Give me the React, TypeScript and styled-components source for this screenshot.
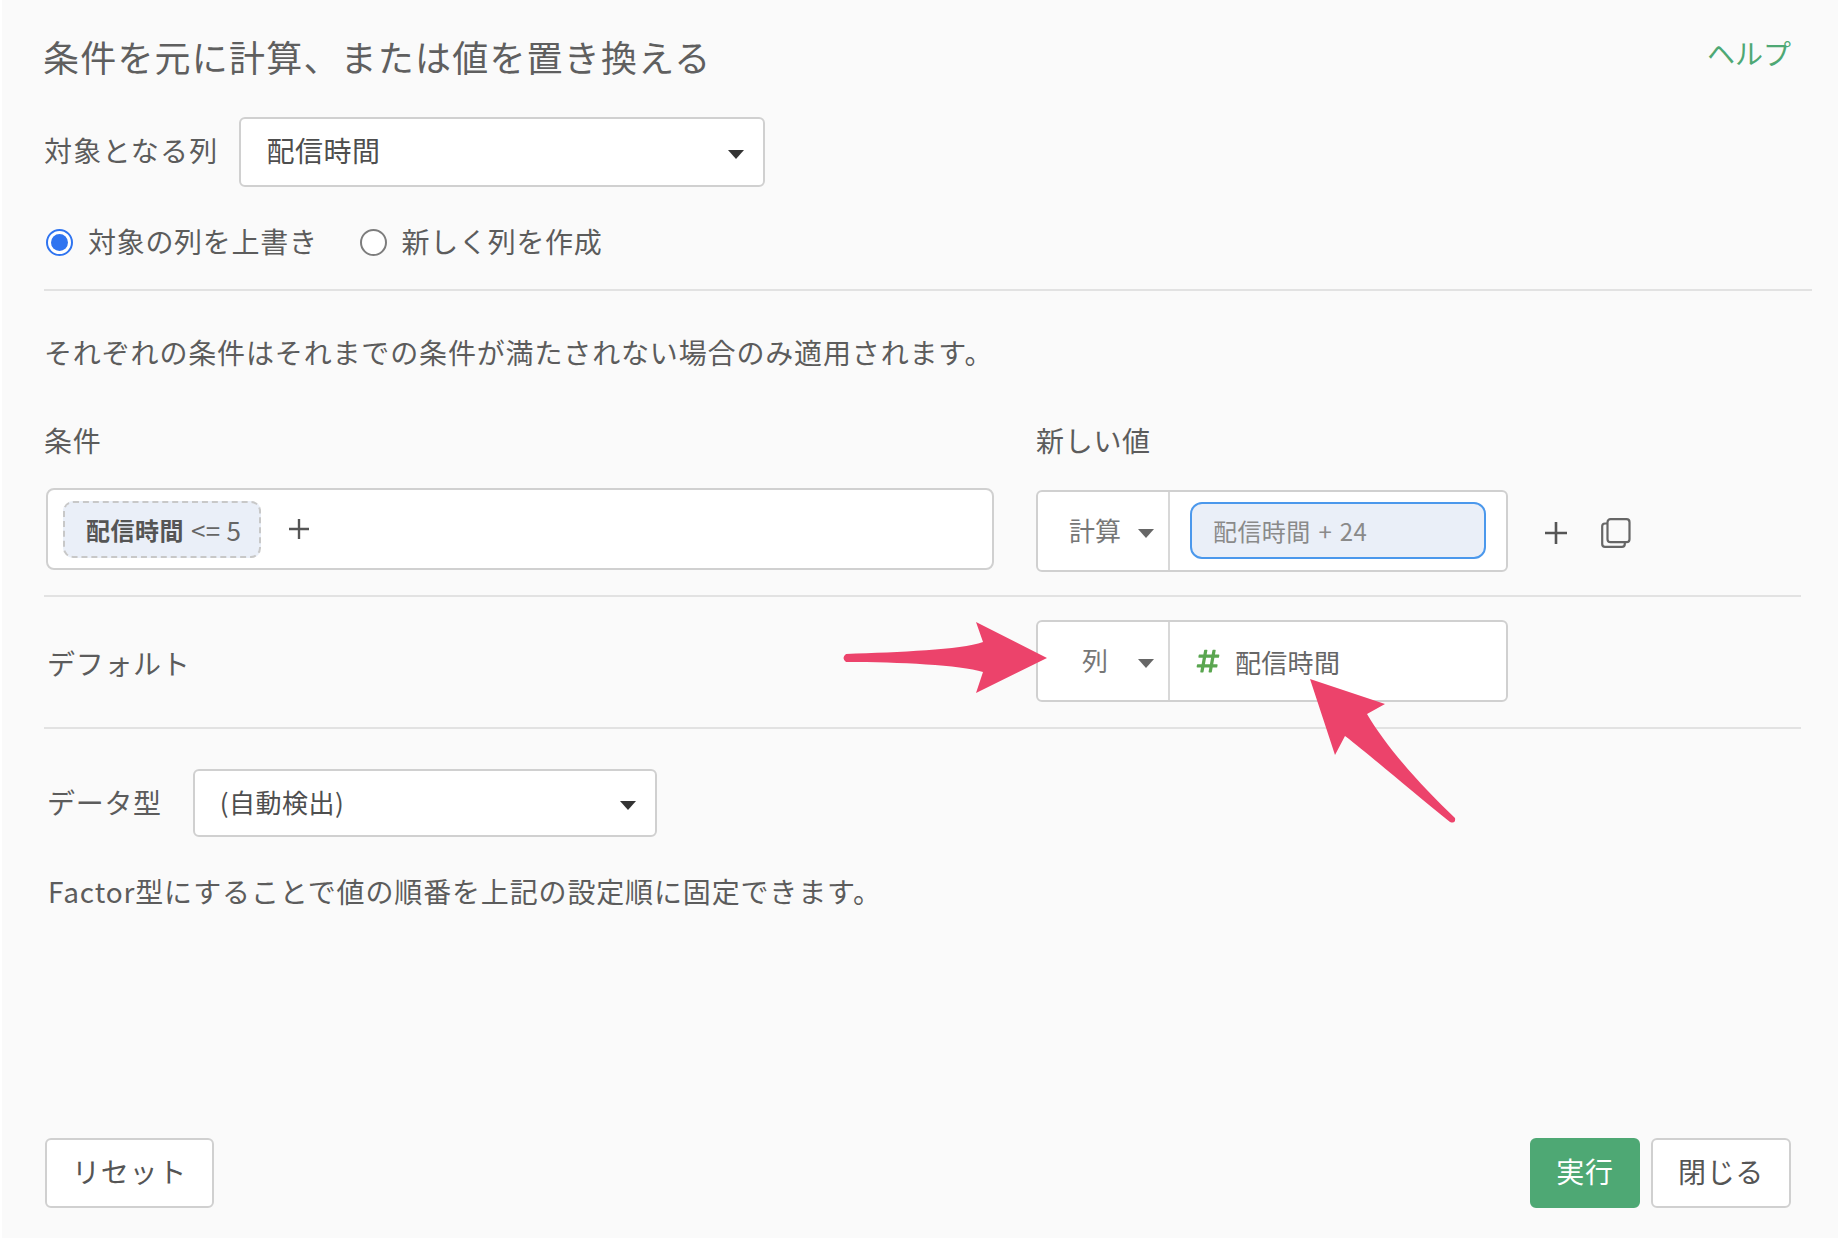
import React from 'react';
import styled, { createGlobalStyle } from 'styled-components';
import { FaHashtag } from 'react-icons/fa';

const GlobalStyle = createGlobalStyle`
  html, body {
    margin: 0;
    padding: 0;
    background: #fafafa;
  }
  * {
    box-sizing: border-box;
  }
`;

const Page = styled.div`
  position: relative;
  width: 1838px;
  height: 1238px;
  padding: 0 47px 30px 44px;
  display: flex;
  flex-direction: column;
  overflow: hidden;
  background: #fafafa;
  border-left: 2px solid #ffffff;
  color: #5c5c5c;
  font-family: "Noto Sans CJK JP", "Noto Sans", sans-serif;
  font-size: 28px;
  letter-spacing: 0.7px;
`;
const Header = styled.div`
  height: 117px;
  margin-left: -3px;
  display: flex;
  justify-content: space-between;
  align-items: flex-start;
`;
const Title = styled.h1`
  margin: 34px 0 0;
  font-size: 36px;
  font-weight: 400;
  line-height: 44px;
  letter-spacing: 1.2px;
  color: #5f5f5f;
`;
const HelpLink = styled.a`
  margin-top: 33px;
  font-size: 28px;
  line-height: 40px;
  letter-spacing: 0;
  color: #4ea874;
`;
const FieldRow = styled.div<{ $top?: number; $gap: number }>`
  margin-top: ${(p) => p.$top ?? 0}px;
  display: flex;
  align-items: center;
  gap: ${(p) => p.$gap}px;
`;
const FieldLabel = styled.label`
  margin: -4px 0 0 -2px;
  font-size: 28px;
  line-height: 40px;
  letter-spacing: 1.2px;
  white-space: nowrap;
`;
const Select = styled.div<{ $width: number; $height: number; $size: number }>`
  width: ${(p) => p.$width}px;
  height: ${(p) => p.$height}px;
  padding: 0 19px 0 25px;
  display: flex;
  align-items: center;
  justify-content: space-between;
  background: #ffffff;
  border: 2px solid #d0d0d0;
  border-radius: 6px;
  font-size: ${(p) => p.$size}px;
  letter-spacing: 0.5px;
  color: #4e4e4e;
`;
const SelectText = styled.span`
  margin-top: -4px;
`;
const Caret = styled.span<{ $color?: string }>`
  flex: none;
  width: 0;
  height: 0;
  margin-top: 4px;
  border-left: 8px solid transparent;
  border-right: 8px solid transparent;
  border-top: 9px solid ${(p) => p.$color ?? '#333333'};
`;
const RadioRow = styled.div`
  margin-top: 41px;
  display: flex;
  align-items: center;
  height: 28px;
`;
const RadioOption = styled.div`
  display: flex;
  align-items: center;
  gap: 15px;
  margin-right: 42px;
`;
const RadioLabel = styled.span`
  margin-top: -2px;
`;
const RadioMark = styled.span<{ $checked?: boolean }>`
  width: 27px;
  height: 27px;
  border-radius: 50%;
  background: #ffffff;
  border: 2px solid ${(p) => (p.$checked ? '#2f74f0' : '#7d7d7d')};
  display: flex;
  align-items: center;
  justify-content: center;
  &::after {
    content: '';
    display: ${(p) => (p.$checked ? 'block' : 'none')};
    width: 17px;
    height: 17px;
    border-radius: 50%;
    background: #2f74f0;
  }
`;
const Divider = styled.hr<{ $top: number; $width: number }>`
  margin: ${(p) => p.$top}px 0 0 -2px;
  width: ${(p) => p.$width}px;
  height: 2px;
  flex: none;
  border: 0;
  background: #e2e2e2;
`;
const Note = styled.p<{ $top: number; $indent?: number }>`
  margin: ${(p) => p.$top}px 0 0 ${(p) => p.$indent ?? 0}px;
  font-size: 28px;
  line-height: 40px;
  letter-spacing: 0.85px;
`;
const RuleGrid = styled.div<{ $top: number }>`
  margin-top: ${(p) => p.$top}px;
  display: grid;
  grid-template-columns: 948px 472px auto;
  column-gap: 42px;
  align-items: center;
`;
const ColumnLabel = styled.div<{ $inset?: number }>`
  margin-left: ${(p) => p.$inset ?? 0}px;
  font-size: 28px;
  line-height: 40px;
`;
const ConditionBox = styled.div`
  height: 82px;
  margin-bottom: 2px;
  padding-left: 15px;
  display: flex;
  align-items: center;
  gap: 28px;
  background: #ffffff;
  border: 2px solid #d0d0d0;
  border-radius: 8px;
`;
const ConditionChip = styled.div`
  width: 198px;
  height: 57px;
  padding-left: 21px;
  display: flex;
  align-items: center;
  gap: 7px;
  background: #eaeff8;
  border: 2px dashed #c8c8c8;
  border-radius: 10px;
  font-size: 26px;
  letter-spacing: 0.3px;
  color: #666666;
  white-space: nowrap;
`;
const ChipColumn = styled.b`
  font-size: 24px;
  font-weight: 700;
  letter-spacing: 0.5px;
  color: #555555;
`;
const ValueBox = styled.div<{ $top?: number }>`
  height: 82px;
  margin-top: ${(p) => p.$top ?? 0}px;
  display: flex;
  background: #ffffff;
  border: 2px solid #d0d0d0;
  border-radius: 6px;
`;
const ValueType = styled.div`
  width: 132px;
  flex: none;
  padding-left: 28px;
  display: flex;
  align-items: center;
  gap: 14px;
  border-right: 2px solid #d8d8d8;
  font-size: 26px;
  letter-spacing: 0;
  color: #777777;
`;
const ValueTypeText = styled.span`
  width: 58px;
  margin-top: -3px;
  text-align: center;
`;
const ValueField = styled.div`
  flex: 1;
  padding: 0 20px;
  display: flex;
  align-items: center;
  font-size: 26px;
  letter-spacing: 0.3px;
  color: #666666;
`;
const ValueInput = styled.div`
  width: 100%;
  height: 57px;
  margin-top: -2px;
  padding-left: 21px;
  display: flex;
  align-items: center;
  background: #eaeff8;
  border: 2px solid #4b98ec;
  border-radius: 12px;
  font-size: 24px;
  letter-spacing: 0.4px;
  word-spacing: 2px;
  color: #8a8a8a;
`;
const ColumnValue = styled.span`
  display: flex;
  align-items: center;
  gap: 14px;
  margin-left: 5px;
  color: #666666;
`;
const RowActions = styled.div`
  display: flex;
  align-items: center;
  gap: 34px;
  margin: 5px 0 0 -5px;
  color: #555555;
`;
const RowLabel = styled.div<{ $drop?: number }>`
  padding-left: 1px;
  margin-top: ${(p) => p.$drop ?? 0}px;
  font-size: 28px;
  line-height: 40px;
`;
const Footer = styled.div`
  margin-top: auto;
  margin-left: -1px;
  display: flex;
  align-items: stretch;
  gap: 11px;
`;
const Button = styled.button<{ $primary?: boolean; $width: number }>`
  width: ${(p) => p.$width}px;
  height: 70px;
  padding: 0 0 4px;
  background: ${(p) => (p.$primary ? '#4ea874' : '#ffffff')};
  border: 2px solid ${(p) => (p.$primary ? '#4ea874' : '#d0d0d0')};
  border-radius: 6px;
  color: ${(p) => (p.$primary ? '#ffffff' : '#555555')};
  font-family: inherit;
  font-size: 28px;
  letter-spacing: 0.7px;
`;
const FooterSpacer = styled.div`
  flex: 1;
`;
const ArrowLayer = styled.svg`
  position: absolute;
  left: -2px;
  top: 0;
  pointer-events: none;
`;

const PlusIcon = ({ size }: { size: number }) => (
  <svg width={size} height={size} viewBox="0 0 22 22" fill="none" stroke="#555555" strokeWidth="2.6">
    <path d="M11 0v22M0 11h22" />
  </svg>
);

const CopyIcon = () => (
  <svg width="30" height="30" viewBox="0 0 30 30" fill="none" stroke="#666666" strokeWidth="2.2">
    <rect x="6.5" y="1.2" width="22" height="23" rx="3" />
    <path d="M6.5 5.5H4A2.8 2.8 0 0 0 1.2 8.3V26A2.8 2.8 0 0 0 4 28.8H21A2.8 2.8 0 0 0 23.8 26V24.2" />
  </svg>
);

const App = () => (
  <Page>
    <GlobalStyle />
    <Header>
      <Title>条件を元に計算、または値を置き換える</Title>
      <HelpLink>ヘルプ</HelpLink>
    </Header>
    <FieldRow $gap={21}>
      <FieldLabel>対象となる列</FieldLabel>
      <Select $width={526} $height={70} $size={28}>
        <SelectText>配信時間</SelectText>
        <Caret />
      </Select>
    </FieldRow>
    <RadioRow>
      <RadioOption>
        <RadioMark $checked />
        <RadioLabel>対象の列を上書き</RadioLabel>
      </RadioOption>
      <RadioOption>
        <RadioMark />
        <RadioLabel>新しく列を作成</RadioLabel>
      </RadioOption>
    </RadioRow>
    <Divider $top={33} $width={1768} />
    <Note $top={41} $indent={-2}>それぞれの条件はそれまでの条件が満たされない場合のみ適用されます。</Note>
    <RuleGrid $top={48}>
      <ColumnLabel $inset={-2}>条件</ColumnLabel>
      <ColumnLabel>新しい値</ColumnLabel>
      <span />
    </RuleGrid>
    <RuleGrid $top={28}>
      <ConditionBox>
        <ConditionChip>
          <ChipColumn>配信時間</ChipColumn> {'<= 5'}
        </ConditionChip>
        <PlusIcon size={20} />
      </ConditionBox>
      <ValueBox $top={2}>
        <ValueType>
          <ValueTypeText>計算</ValueTypeText>
          <Caret $color="#666666" />
        </ValueType>
        <ValueField>
          <ValueInput>配信時間 + 24</ValueInput>
        </ValueField>
      </ValueBox>
      <RowActions>
        <PlusIcon size={22} />
        <CopyIcon />
      </RowActions>
    </RuleGrid>
    <Divider $top={23} $width={1757} />
    <RuleGrid $top={23}>
      <RowLabel $drop={4}>デフォルト</RowLabel>
      <ValueBox>
        <ValueType>
          <ValueTypeText>列</ValueTypeText>
          <Caret $color="#666666" />
        </ValueType>
        <ValueField>
          <ColumnValue>
            <FaHashtag size={26} color="#5aa650" />
            配信時間
          </ColumnValue>
        </ValueField>
      </ValueBox>
      <span />
    </RuleGrid>
    <Divider $top={25} $width={1757} />
    <FieldRow $top={40} $gap={31}>
      <RowLabel $drop={-3}>データ型</RowLabel>
      <Select $width={464} $height={68} $size={26}>
        <SelectText>(自動検出)</SelectText>
        <Caret />
      </Select>
    </FieldRow>
    <Note $top={34} $indent={2}>Factor型にすることで値の順番を上記の設定順に固定できます。</Note>
    <Footer>
      <Button $width={169}>リセット</Button>
      <FooterSpacer />
      <Button $primary $width={110}>実行</Button>
      <Button $width={140}>閉じる</Button>
    </Footer>
    <ArrowLayer width="1838" height="1238" viewBox="0 0 1838 1238">
      <path
        d="M846 654 C900 652 960 650 983 642 L976 622 L1047 658 L976 693 L983 672 C960 665 900 662 846 662 Q841 658 846 654 Z"
        fill="#ec436b"
      />
      <path
        d="M1310 679 L1385 704 L1367 714 C1385 745 1420 785 1455 818 Q1456 824 1450 822 C1410 790 1370 755 1345 736 L1335 755 Z"
        fill="#ec436b"
      />
    </ArrowLayer>
  </Page>
);

export default App;
